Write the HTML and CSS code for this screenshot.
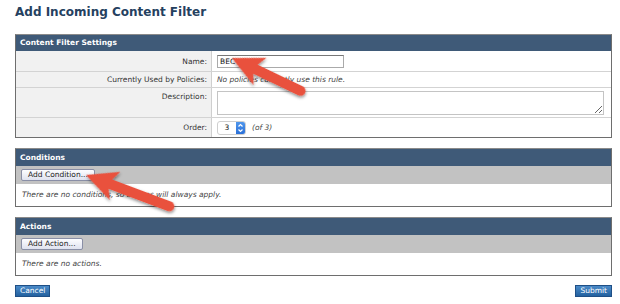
FILE: index.html
```html
<!DOCTYPE html>
<html lang="en">
<head>
  <meta charset="UTF-8" />
  <title>Add Incoming Content Filter</title>
  <link rel="stylesheet" href="styles.css">
</head>
<body>

<div class="page">
  <h1>Add Incoming Content Filter</h1>

  <!-- Settings -->
  <div class="panel settings">
    <div class="block-head">Content Filter Settings</div>
    <div class="field row-name">
      <div class="label">Name:</div>
      <div class="value"><input class="text-input" type="text" value="BEC"></div>
    </div>
    <div class="field row-used">
      <div class="label">Currently Used by Policies:</div>
      <div class="value note">No policies currently use this rule.</div>
    </div>
    <div class="field row-desc">
      <div class="label">Description:</div>
      <div class="value"><textarea class="text-area"></textarea></div>
    </div>
    <div class="field row-order">
      <div class="label">Order:</div>
      <div class="value">
        <span class="select-box">
          <span class="select-val">3</span>
          <span class="stepper">
            <svg width="9" height="12" viewBox="0 0 9 12"><path d="M2.5 4.5 L4.5 2.5 L6.5 4.5 M2.5 7.5 L4.5 9.5 L6.5 7.5" fill="none" stroke="#fff" stroke-width="1.2"/></svg>
          </span>
        </span>
        <span class="note of">(of 3)</span>
      </div>
    </div>
  </div>

  <!-- Conditions -->
  <div class="panel">
    <div class="block-head">Conditions</div>
    <div class="block-bar"><button class="btn-add">Add Condition...</button></div>
    <div class="block-body note">There are no conditions, so actions will always apply.</div>
  </div>

  <!-- Actions -->
  <div class="panel">
    <div class="block-head">Actions</div>
    <div class="block-bar"><button class="btn-add">Add Action...</button></div>
    <div class="block-body note">There are no actions.</div>
  </div>

  <div class="footer">
    <button class="btn-blue">Cancel</button>
    <button class="btn-blue">Submit</button>
  </div>
</div>

<!-- annotation arrows -->
<svg class="marks" width="620" height="304" viewBox="0 0 620 304">
  <defs>
    <filter id="shade" x="-20%" y="-40%" width="140%" height="180%">
      <feDropShadow dx="1" dy="1.5" stdDeviation="1.4" flood-color="#000" flood-opacity="0.45"/>
    </filter>
  </defs>
  <path transform="translate(232 58) rotate(25.6)" filter="url(#shade)" fill="#e9513d"
        d="M0 0 L31 -15 L26 -5 L76 -5 A5 5 0 0 1 76 5 L26 5 L31 15 Z"/>
  <path transform="translate(86 175) rotate(20.6)" filter="url(#shade)" fill="#e9513d"
        d="M0 0 L31 -15 L26 -5 L89 -5 A5 5 0 0 1 89 5 L26 5 L31 15 Z"/>
</svg>

</body>
</html>
```

FILE: styles.css
```css
body {
  font-family: 'DejaVu Sans', Verdana, sans-serif;
  background-color: #fff;
  color: #333;
  margin: 0;
  padding: 0;
}

.page {
  padding: 5px 8px 0 15px;
}

h1 {
  font-size: 12px;
  line-height: 15px;
  color: #25415f;
  margin: 0 0 14px;
}

/* Panels */
.panel {
  width: 597px;
  border: 1px solid #6e6e6e;
  border-top-color: #8a8a8a;
  box-sizing: border-box;
  margin-bottom: 10px;
  font-size: 7.5px;
}

.block-head {
  background-color: #3f5a78;
  color: #fff;
  font-weight: bold;
  height: 17px;
  line-height: 17px;
  padding-left: 4px;
}

.settings .block-head {
  height: 16px;
  line-height: 16px;
}

.field {
  display: grid;
  grid-template-columns: 196px 1fr;
  border-top: 1px solid #d3d3d3;
}

.field .label {
  background-color: #f1f1f1;
  border-right: 1px solid #cfcfcf;
  text-align: right;
  padding-right: 4px;
  display: flex;
  align-items: center;
  justify-content: flex-end;
}

.field .value {
  padding-left: 5px;
  display: flex;
  align-items: center;
}

.row-name { height: 20px; border-top: none; }
.row-used { height: 15px; }
.row-desc { height: 29px; }
.row-desc .label { align-items: flex-start; padding-top: 4px; }
.row-order { height: 19px; }

.note {
  font-style: italic;
  color: #444;
}

.text-input {
  display: block;
  width: 127px;
  height: 13px;
  box-sizing: border-box;
  border: 1px solid #aaa;
  border-top-color: #777;
  font: inherit;
  color: #111;
  padding: 0 2px;
  margin: 0;
}

.text-area {
  display: block;
  width: 387px;
  height: 24px;
  box-sizing: border-box;
  border: 1px solid #c4c4c4;
  margin: 0;
  padding: 0;
  font: inherit;
}

.select-box {
  display: inline-flex;
  width: 29px;
  height: 14px;
  box-sizing: border-box;
  border: 1px solid #cfcfcf;
  border-radius: 3px;
  background: #fff;
  overflow: hidden;
}

.select-val {
  flex: 1;
  text-align: center;
  line-height: 12px;
  color: #111;
}

.stepper {
  width: 9px;
  background: linear-gradient(#4f96ec, #2a70d8);
  display: flex;
  align-items: center;
}

.of {
  margin-left: 6px;
}

/* Conditions / Actions */
.block-bar {
  background-color: #c2c2c2;
  height: 18px;
  padding-left: 5px;
  display: flex;
  align-items: center;
}

.block-body {
  height: 22px;
  line-height: 22px;
  padding-left: 6px;
}

.btn-add {
  font-family: inherit;
  font-size: 7.5px;
  color: #222;
  height: 12px;
  padding: 0 6px;
  border: 1px solid #8a8fa6;
  border-radius: 2px;
  background: linear-gradient(#fdfdff, #dfe2ef);
  line-height: 10px;
}

.footer {
  display: flex;
  justify-content: space-between;
  margin-top: -1px;
}

.btn-blue {
  font-family: inherit;
  font-size: 7.5px;
  color: #fff;
  height: 12px;
  padding: 0 4px;
  border: 1px solid #1f4f86;
  border-radius: 0;
  background: linear-gradient(#4a8ac8, #23619f);
  line-height: 10px;
}

.marks {
  position: absolute;
  top: 0;
  left: 0;
  pointer-events: none;
}
```
